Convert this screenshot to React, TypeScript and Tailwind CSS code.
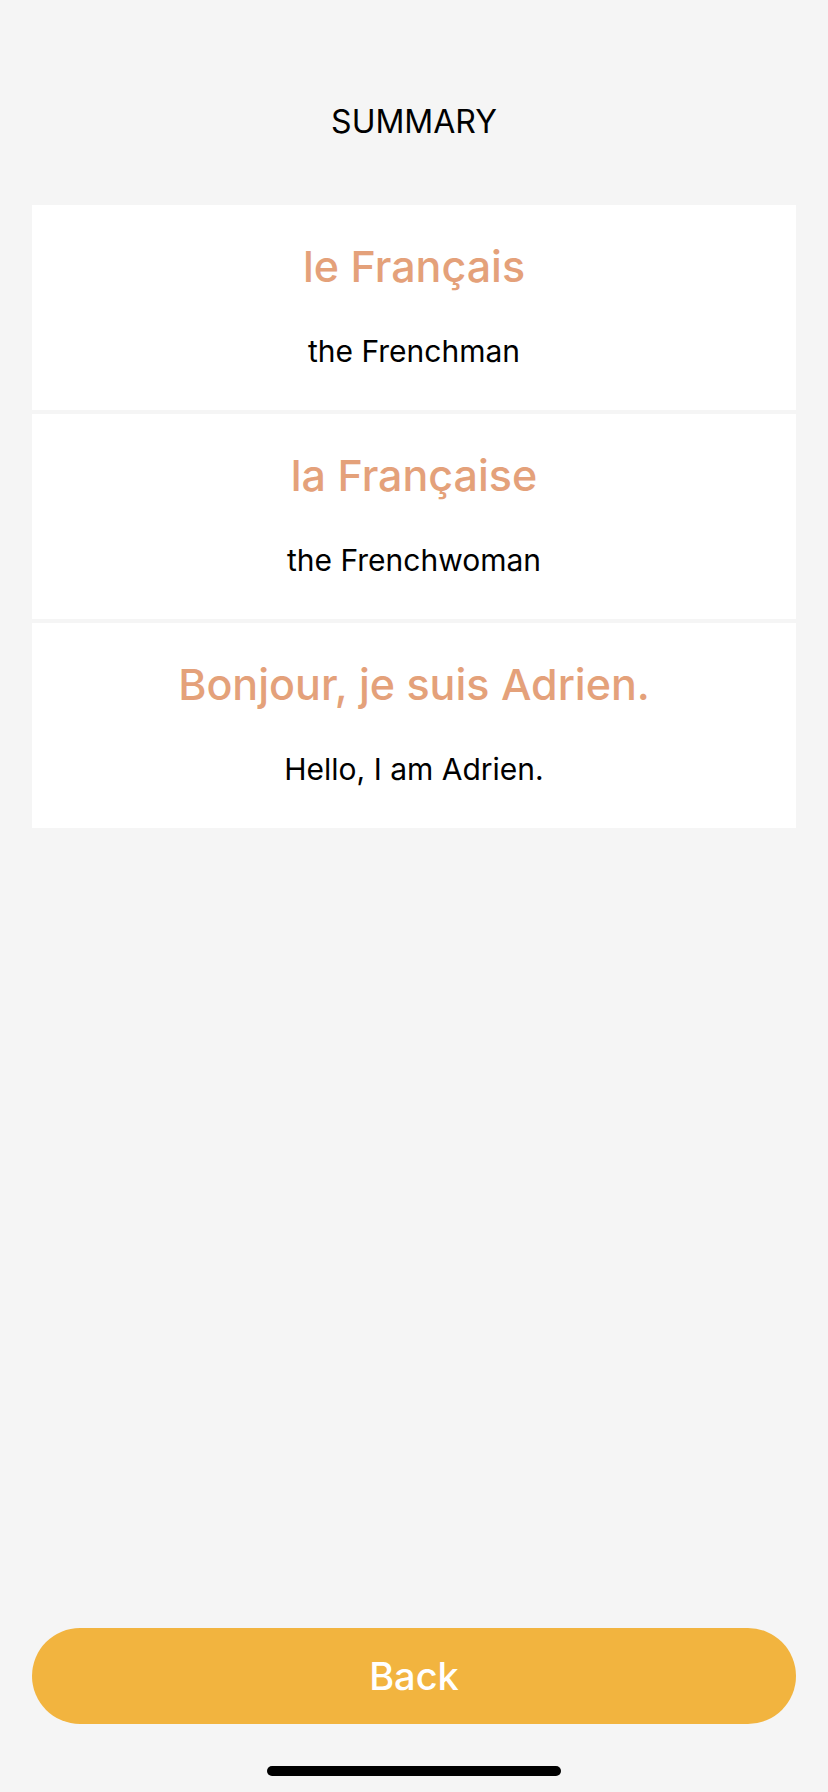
import React from "react";

const items = [
  { fr: "le Français", en: "the Frenchman" },
  { fr: "la Française", en: "the Frenchwoman" },
  { fr: "Bonjour, je suis Adrien.", en: "Hello, I am Adrien." },
];

export default function App() {
  return (
    <div
      className="h-[1792px] w-full flex flex-col bg-[#F5F5F5]"
      style={{ fontFamily: "Inter, 'Noto Sans', sans-serif" }}
    >
      <div className="pt-[103px] text-center text-[32px] leading-[1.2] text-black">
        SUMMARY
      </div>
      <div className="mt-[64px] px-[32px] flex flex-col gap-[4px]">
        {items.map((it) => (
          <div
            key={it.fr}
            className="bg-white flex flex-col items-center pt-[35px] pb-[41px]"
          >
            <div className="text-[43px] leading-[53px] font-medium text-[#E4A17A]">{it.fr}</div>
            <div className="mt-[40px] text-[30px] leading-[1.2] text-black">{it.en}</div>
          </div>
        ))}
      </div>
      <div className="flex-1" />
      <div className="px-[32px]">
        <button className="w-full h-[96px] rounded-full bg-[#F2B43F] text-white text-[38px] font-medium flex items-center justify-center">
          Back
        </button>
      </div>
      <div className="mt-[42px] pb-[16px] flex justify-center">
        <div className="w-[294px] h-[10px] rounded-full bg-black" />
      </div>
    </div>
  );
}
